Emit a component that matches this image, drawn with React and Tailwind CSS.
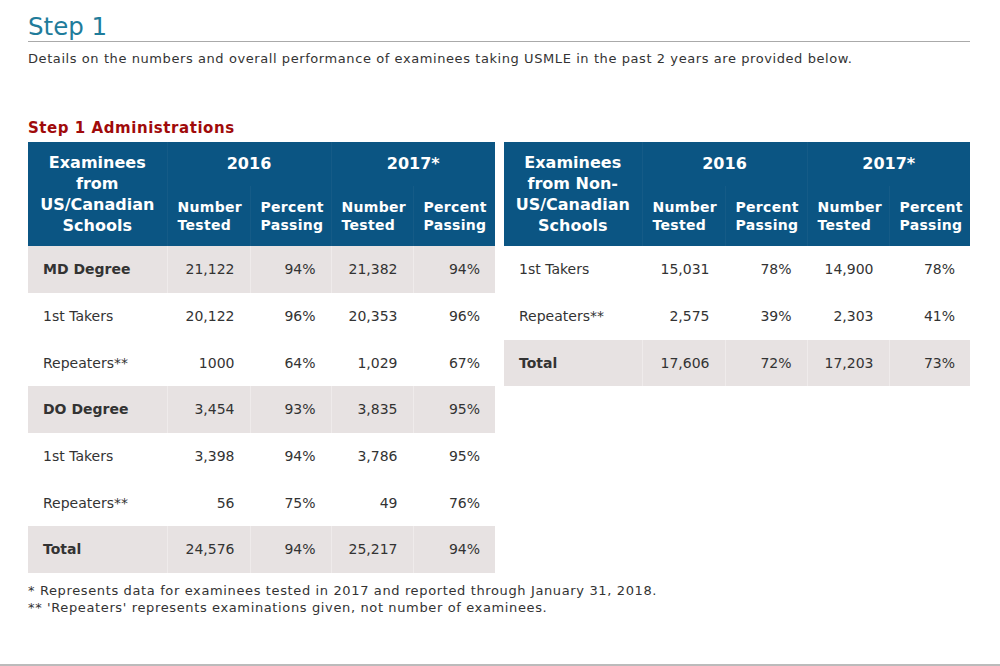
import React from "react";

const leftRows = [
  { label: "MD Degree", bold: true, gray: true, v: ["21,122", "94%", "21,382", "94%"], h: "h-[47px]" },
  { label: "1st Takers", v: ["20,122", "96%", "20,353", "96%"], h: "h-[47px]" },
  { label: "Repeaters**", v: ["1000", "64%", "1,029", "67%"], h: "h-[46px]" },
  { label: "DO Degree", bold: true, gray: true, v: ["3,454", "93%", "3,835", "95%"], h: "h-[47px]" },
  { label: "1st Takers", v: ["3,398", "94%", "3,786", "95%"], h: "h-[47px]" },
  { label: "Repeaters**", v: ["56", "75%", "49", "76%"], h: "h-[46px]" },
  { label: "Total", bold: true, gray: true, v: ["24,576", "94%", "25,217", "94%"], h: "h-[47px]" },
];

const rightRows = [
  { label: "1st Takers", v: ["15,031", "78%", "14,900", "78%"], h: "h-[47px]" },
  { label: "Repeaters**", v: ["2,575", "39%", "2,303", "41%"], h: "h-[47px]" },
  { label: "Total", bold: true, gray: true, v: ["17,606", "72%", "17,203", "73%"], h: "h-[46px]" },
];

function DataTable({ labelLines, rows, widths }) {
  return (
    <table className="border-collapse table-fixed" style={{ width: widths.reduce((a, b) => a + b, 0) }}>
      <colgroup>
        {widths.map((w, i) => (
          <col key={i} style={{ width: w }} />
        ))}
      </colgroup>
      <thead>
        <tr className="h-[44px] bg-[#0b5583] text-white">
          <th rowSpan={2} className="border-r border-[#155b87] align-middle text-center text-[16px] leading-[21px] font-bold px-1">
            {labelLines.map((l, i) => (
              <div key={i}>{l}</div>
            ))}
          </th>
          <th colSpan={2} className="text-center text-[16px] font-bold align-middle border-r border-[#155b87]">2016</th>
          <th colSpan={2} className="text-center text-[16px] font-bold align-middle">2017*</th>
        </tr>
        <tr className="h-[60px] bg-[#0b5583] text-white">
          {["Number|Tested", "Percent|Passing", "Number|Tested", "Percent|Passing"].map((t, i) => (
            <th
              key={i}
              className={`text-left pl-[10px] text-[14px] tracking-[0.3px] leading-[18px] font-bold align-middle ${i < 3 ? "border-r border-[#155b87]" : ""}`}
            >
              {t.split("|").map((l, j) => (
                <div key={j}>{l}</div>
              ))}
            </th>
          ))}
        </tr>
      </thead>
      <tbody>
        {rows.map((r, i) => (
          <tr key={i} className={`${r.h} ${r.gray ? "bg-[#e7e2e2]" : "bg-white"} text-[14px] text-[#333]`}>
            <td className={`pl-[15px] border-r ${r.gray ? "border-[#efebeb]" : "border-white"} ${r.bold ? "font-bold" : ""}`}>
              {r.label}
            </td>
            {r.v.map((v, j) => (
              <td
                key={j}
                className={`text-right pr-[15px] ${j < 3 ? `border-r ${r.gray ? "border-[#efebeb]" : "border-white"}` : ""}`}
              >
                {v}
              </td>
            ))}
          </tr>
        ))}
      </tbody>
    </table>
  );
}

export default function App() {
  return (
    <div className="w-[1000px] h-[666px] bg-white flex flex-col font-['DejaVu_Sans',Verdana,sans-serif] text-[#333]">
      <div className="px-[28px] pr-[30px]">
        <h1 className="pt-[12px] h-[42px] leading-[29px] text-[24.5px] text-[#1f7c9b] border-b-[1.5px] border-[#aaaaaa]">
          Step 1
        </h1>
        <p className="mt-[8px] text-[13px] tracking-[0.58px] leading-[18px] text-[#333]">
          Details on the numbers and overall performance of examinees taking USMLE in the past 2 years are provided below.
        </p>
        <h2 className="mt-[50px] text-[15px] tracking-[0.55px] leading-[20px] font-bold text-[#a00a0a]">Step 1 Administrations</h2>
        <div className="mt-[4px] flex items-start gap-[9px]">
          <DataTable
            labelLines={["Examinees", "from", "US/Canadian", "Schools"]}
            rows={leftRows}
            widths={[139, 83, 81, 82, 82]}
          />
          <DataTable
            labelLines={["Examinees", "from Non-", "US/Canadian", "Schools"]}
            rows={rightRows}
            widths={[138, 83, 82, 82, 81]}
          />
        </div>
        <div className="mt-[9px] text-[13px] tracking-[0.63px] leading-[17px] text-[#333]">
          <p>* Represents data for examinees tested in 2017 and reported through January 31, 2018.</p>
          <p>** 'Repeaters' represents examinations given, not number of examinees.</p>
        </div>
      </div>
      <div className="flex-1" />
      <div className="h-[2px] bg-[#bbbbbb]" />
    </div>
  );
}
